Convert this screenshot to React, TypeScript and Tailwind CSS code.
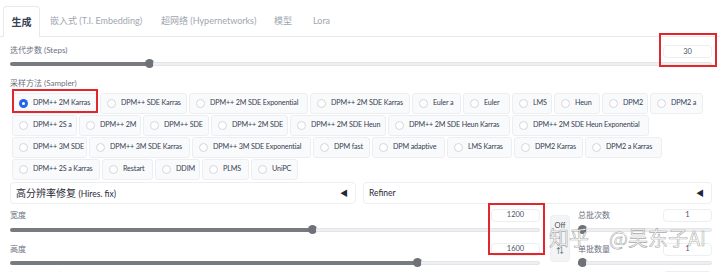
import React from "react";

type Opt = [string, string, boolean?];

const rows: Opt[][] = [
  [
    ["DPM++ 2M Karras", "w-[86px]", true],
    ["DPM++ SDE Karras", "w-[87px]"],
    ["DPM++ 2M SDE Exponential", "w-[119px]"],
    ["DPM++ 2M SDE Karras", "w-[100px]"],
    ["Euler a", "w-[49px]"],
    ["Euler", "w-[47px]"],
    ["LMS", "w-[40px]"],
    ["Heun", "w-[46px]"],
    ["DPM2", "w-[46px]"],
    ["DPM2 a", "w-[53px]"],
  ],
  [
    ["DPM++ 2S a", "w-[65px]"],
    ["DPM++ 2M", "w-[62px]"],
    ["DPM++ SDE", "w-[66px]"],
    ["DPM++ 2M SDE", "w-[77px]"],
    ["DPM++ 2M SDE Heun", "w-[96px]"],
    ["DPM++ 2M SDE Heun Karras", "w-[122px]"],
    ["DPM++ 2M SDE Heun Exponential", "w-[137px]"],
  ],
  [
    ["DPM++ 3M SDE", "w-[75px]"],
    ["DPM++ 3M SDE Karras", "w-[101px]"],
    ["DPM++ 3M SDE Exponential", "w-[119px]"],
    ["DPM fast", "w-[57px]"],
    ["DPM adaptive", "w-[73px]"],
    ["LMS Karras", "w-[65px]"],
    ["DPM2 Karras", "w-[69px]"],
    ["DPM2 a Karras", "w-[77px]"],
  ],
  [
    ["DPM++ 2S a Karras", "w-[88px]"],
    ["Restart", "w-[51px]"],
    ["DDIM", "w-[45px]"],
    ["PLMS", "w-[47px]"],
    ["UniPC", "w-[47px]"],
  ],
];

function Slider({ fill }: { fill: string }) {
  return (
    <div className="flex h-[9px] items-center">
      <div className={`h-[4px] rounded-l-full bg-[#777b80] ${fill}`} />
      <div className="h-[9px] w-[9px] shrink-0 -mx-[1px] rounded-full bg-[#6e7278]" />
      <div className="h-[4px] flex-1 rounded-r-full border border-[#e3e5e8] bg-[#eeeff1]" />
    </div>
  );
}

function NumBox({ value }: { value: string }) {
  return (
    <div className="flex h-[13px] w-[49px] items-center justify-center rounded-[4px] border border-[#eceef1] bg-white text-[7.5px] text-[#4b5563]">
      {value}
    </div>
  );
}

function Radio({ label, w, on }: { label: string; w: string; on?: boolean }) {
  return (
    <div
      className={`flex h-[21px] shrink-0 items-center gap-[5px] whitespace-nowrap rounded-[3px] border border-[#eceef1] bg-[#f9fafb] pl-[6px] text-[7.2px] tracking-[-0.15px] text-[#374151] ${w}`}
    >
      {on ? (
        <span className="flex h-[9px] w-[9px] shrink-0 items-center justify-center rounded-full bg-[#2563eb]">
          <span className="h-[3px] w-[3px] rounded-full bg-white" />
        </span>
      ) : (
        <span className="h-[9px] w-[9px] shrink-0 rounded-full border border-[#d4d7dc] bg-white" />
      )}
      {label}
    </div>
  );
}

export default function App() {
  return (
    <div className="relative h-[272px] w-[720px] overflow-hidden bg-white font-['Lato','Noto_Sans_CJK_SC',sans-serif]">
      {/* tabs */}
      <div className="flex h-[37px] items-end whitespace-nowrap border-b border-[#e7e9ec] pl-[3px] text-[9px]">
        <div className="-mb-px flex h-[31px] w-[37px] items-center justify-center rounded-t-[4px] border border-b-0 border-[#e7e9ec] bg-white text-[10px] font-semibold text-[#374151]">
          生成
        </div>
        <div className="flex h-[30px] w-[111px] items-center pl-[10px] text-[#a0a6af]">嵌入式 (T.I. Embedding)</div>
        <div className="flex h-[30px] w-[113px] items-center pl-[10px] text-[#a0a6af]">超网络 (Hypernetworks)</div>
        <div className="flex h-[30px] w-[39px] items-center pl-[10px] text-[#a0a6af]">模型</div>
        <div className="flex h-[30px] items-center pl-[10px] text-[#a0a6af]">Lora</div>
      </div>

      <div className="pl-[10px] pr-[8px]">
        {/* steps */}
        <div className="mt-[7px] flex items-start justify-between">
          <div className="text-[8px] leading-[12px] text-[#6b7280]">迭代步数 (Steps)</div>
          <div className="mt-[1px]">
            <NumBox value="30" />
          </div>
        </div>
        <div className="mt-[1px]">
          <Slider fill="w-[136px]" />
        </div>

        {/* sampler */}
        <div className="mt-[9px] text-[8px] leading-[12px] text-[#6b7280]">采样方法 (Sampler)</div>
        <div className="mt-[4px] flex flex-col gap-[1px] pl-[2px]">
          {rows.map((r, i) => (
            <div key={i} className="flex gap-[2px]">
              {r.map(([l, w, on]) => (
                <Radio key={l} label={l} w={w} on={on} />
              ))}
            </div>
          ))}
        </div>

        {/* accordions */}
        <div className="mt-[2px] flex gap-[7px]">
          <div className="flex h-[22px] w-[346px] items-center justify-between rounded-[4px] border border-[#eceef1] pl-[5px] pr-[7px] text-[10px] text-[#1f2937]">
            <span>高分辨率修复 <span className="text-[8.5px]">(Hires. fix)</span></span>
            <span className="text-[8px]">◀</span>
          </div>
          <div className="flex h-[22px] flex-1 items-center justify-between rounded-[4px] border border-[#eceef1] pl-[5px] pr-[7px] text-[8.5px] text-[#1f2937]">
            <span>Refiner</span>
            <span className="text-[8px]">◀</span>
          </div>
        </div>

        {/* dimensions + batch */}
        <div className="flex">
          <div className="w-[530px]">
            <div className="mt-[4px] flex h-[14px] items-center justify-between">
              <span className="text-[8px] text-[#6b7280]">宽度</span>
              <NumBox value="1200" />
            </div>
            <div className="mt-[3px]">
              <Slider fill="w-[299px]" />
            </div>
            <div className="mt-[8px] flex h-[14px] items-center justify-between">
              <span className="text-[8px] text-[#6b7280]">高度</span>
              <NumBox value="1600" />
            </div>
            <div className="mt-[2px]">
              <Slider fill="w-[404px]" />
            </div>
            <div className="mt-[3px] text-[8px] leading-[12px] text-[#6b7280]">提示词引导系数 (CFG Scale)</div>
          </div>

          <div className="ml-[10px] mt-[11px] flex h-[47px] w-[20px] flex-col items-center justify-between rounded-[4px] border border-[#eceef1] bg-[#f3f4f6] py-[4px] text-[7.5px] text-[#4b5563]">
            <span>Off</span>
            <span>⇅</span>
          </div>

          <div className="ml-[8px] flex-1">
            <div className="mt-[4px] flex h-[14px] items-center justify-between">
              <span className="text-[8px] text-[#6b7280]">总批次数</span>
              <NumBox value="1" />
            </div>
            <div className="mt-[3px]">
              <Slider fill="w-[1px]" />
            </div>
            <div className="mt-[8px] flex h-[14px] items-center justify-between">
              <span className="text-[8px] text-[#6b7280]">单批数量</span>
              <NumBox value="1" />
            </div>
            <div className="mt-[2px]">
              <Slider fill="w-[1px]" />
            </div>
            <div className="mt-[4px] flex justify-end">
              <NumBox value="7" />
            </div>
          </div>
        </div>
      </div>

      {/* annotation boxes */}
      <div className="absolute left-[659px] top-[33px] h-[34px] w-[58px] border-2 border-[#e3262b]" />
      <div className="absolute left-[12px] top-[89px] h-[24px] w-[86px] border-2 border-[#e3262b]" />
      <div className="absolute left-[488px] top-[203px] h-[52px] w-[57px] border-2 border-[#e3262b]" />

      {/* watermark */}
      <div className="pointer-events-none absolute left-[549px] top-[226px] flex items-center text-[20px] leading-[24px] text-white/90 [-webkit-text-stroke:0.6px_rgba(90,90,90,0.55)] font-['Noto_Sans_CJK_SC',sans-serif]">
        <span>知乎</span>
        <span className="ml-[20px]">@吴东子AI</span>
      </div>
    </div>
  );
}
